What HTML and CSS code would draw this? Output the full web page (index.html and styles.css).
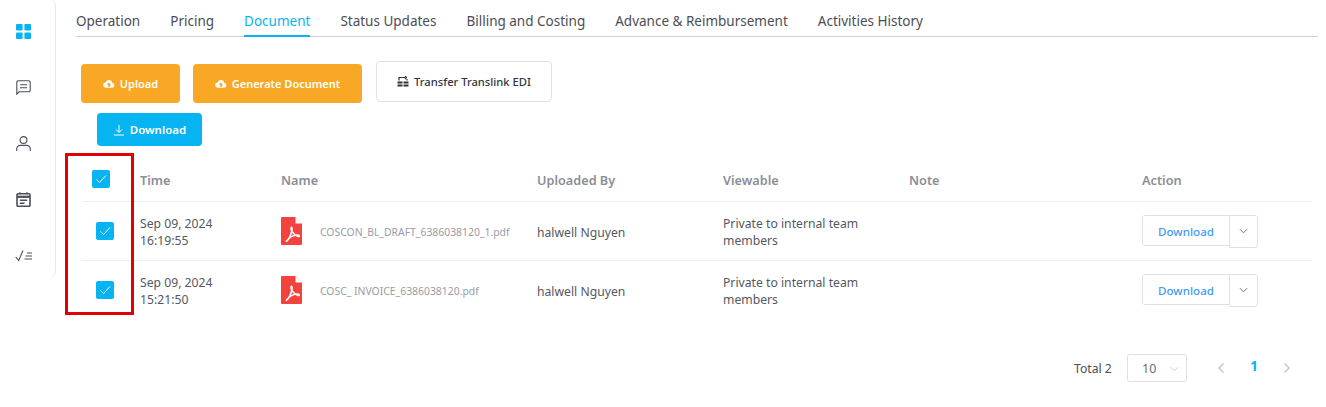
FILE: index.html
```html
<!DOCTYPE html>
<html lang="en">
<head>
<meta charset="utf-8">
<title>Document</title>
<link rel="stylesheet" href="styles.css">
</head>
<body>
<div class="page">
  <aside class="sidebar">
    <svg class="nav-icon" viewBox="0 0 15 15"><rect x="0" y="0" width="6.600" height="6.600" rx="1" fill="#06b4f1"/><rect x="8.400" y="0" width="6.600" height="6.600" rx="1" fill="#06b4f1"/><rect x="0" y="8.400" width="6.600" height="6.600" rx="1" fill="#06b4f1"/><rect x="8.400" y="8.400" width="6.600" height="6.600" rx="1" fill="#06b4f1"/></svg>
    <svg class="nav-icon" viewBox="0 0 15 15" fill="none" stroke="#4a4f5a" stroke-width="1.100"><path d="M.8 14.200V2.300A1.500 1.500 0 0 1 2.300.8h10.400a1.500 1.500 0 0 1 1.500 1.500v8a1.500 1.500 0 0 1-1.500 1.500H3.200z"/><path d="M4 4.800h7M4 7.800h7"/></svg>
    <svg class="nav-icon" viewBox="0 0 15 15" fill="none" stroke="#4a4f5a" stroke-width="1.100"><circle cx="7.500" cy="4" r="3.400"/><path d="M.7 15v-2a3.600 3.600 0 0 1 3.600-3.600h6.400a3.600 3.600 0 0 1 3.600 3.600v2"/></svg>
    <svg class="nav-icon" viewBox="0 0 15 15" fill="none" stroke="#4a4f5a" stroke-width="1.600"><rect x="1" y="1.800" width="13" height="12.500" rx="1"/><path d="M1 4.800h13" stroke-width="2.200"/><path d="M4 .3v2M11 .3v2M3.800 8.300h7.400M3.800 11.300h4.700" stroke-width="1.400"/></svg>
    <svg class="nav-icon wide" viewBox="0 0 18 15" fill="none" stroke="#4a4f5a" stroke-width="1.100"><path d="M.7 9l3 3.500L8 2.500"/><path d="M12 5h5M10.500 8H17M9.500 11H17"/></svg>
  </aside>
  <main class="main">
    <nav class="tabs">
      <a class="tab">Operation</a>
      <a class="tab">Pricing</a>
      <a class="tab active">Document</a>
      <a class="tab">Status Updates</a>
      <a class="tab">Billing and Costing</a>
      <a class="tab">Advance &amp; Reimbursement</a>
      <a class="tab">Activities History</a>
    </nav>
    <div class="toolbar">
      <button class="btn orange upload"><svg class="btn-icon" viewBox="0 0 16 16"><path fill="#fff" d="M12.500 6.500a4.700 4.700 0 0 0-9-.6A3.500 3.500 0 0 0 4 13h8.500a3.300 3.300 0 0 0 0-6.500zM9.300 9v2.500H6.700V9H5l3-3 3 3z"/></svg>Upload</button>
      <button class="btn orange generate"><svg class="btn-icon" viewBox="0 0 16 16"><path fill="#fff" d="M12.500 6.500a4.700 4.700 0 0 0-9-.6A3.500 3.500 0 0 0 4 13h8.500a3.300 3.300 0 0 0 0-6.500zM9.300 9v2.500H6.700V9H5l3-3 3 3z"/></svg>Generate Document</button>
      <button class="btn outline"><svg class="btn-icon" viewBox="0 0 12 12"><path fill="none" stroke="#333" stroke-width="1.200" d="M2 4.500V1.500h6M8 0 9.500 1.500 8 3M10 4.500V3"/><path fill="#333" d="M.5 5.500h5v2h-5zM.5 8.500h5v2h-5zM6.500 5.500h5v2h-5zM6.500 8.500h5v2h-5z"/></svg>Transfer Translink EDI</button>
    </div>
    <div class="download-row">
      <button class="btn blue"><svg class="btn-icon" viewBox="0 0 12 12" fill="none" stroke="#fff" stroke-width="1"><path d="M6 1v7M3 5.500 6 8.500l3-3M1 11h10"/></svg>Download</button>
    </div>
    <div class="table">
      <div class="row head">
        <span class="check"><span class="box"><svg viewBox="0 0 12 12"><path d="M1.500 6.500 4.500 9.500 11 2.500" fill="none" stroke="#fff" stroke-width="1"/></svg></span></span>
        <span>Time</span><span>Name</span><span>Uploaded By</span><span>Viewable</span><span>Note</span><span>Action</span>
      </div>
      <div class="row item">
        <span class="check"><span class="box"><svg viewBox="0 0 12 12"><path d="M1.500 6.500 4.500 9.500 11 2.500" fill="none" stroke="#fff" stroke-width="1"/></svg></span></span>
        <span class="txt">Sep 09, 2024<br>16:19:55</span>
        <span class="file"><svg class="pdf" viewBox="0 0 21 28"><path fill="#f4433c" d="M1 0h13.500l6.500 6.500V27a1 1 0 0 1-1 1H1a1 1 0 0 1-1-1V1a1 1 0 0 1 1-1z"/><path fill="#fff" d="M14.500 0 21 6.500h-6.500z"/><path fill="none" stroke="#fff" stroke-width="1.500" d="M5 24.500c2.500-1.500 5-7 6-11.500.5-2-.5-4-1-2-.5 2 2 6.500 7 8.500 2 .5 2-1.500-1-1.500-3 0-7 1.500-11 6.500z"/></svg><span class="fname txt">COSCON_BL_DRAFT_6386038120_1.pdf</span></span>
        <span class="txt">halwell Nguyen</span>
        <span class="txt">Private to internal team<br>members</span>
        <span></span>
        <span class="split"><button class="dl">Download</button><button class="caret"><svg viewBox="0 0 10 6"><path d="M1 1l4 4 4-4" fill="none" stroke="#5b6270" stroke-width="1"/></svg></button></span>
      </div>
      <div class="row item last">
        <span class="check"><span class="box"><svg viewBox="0 0 12 12"><path d="M1.500 6.500 4.500 9.500 11 2.500" fill="none" stroke="#fff" stroke-width="1"/></svg></span></span>
        <span class="txt">Sep 09, 2024<br>15:21:50</span>
        <span class="file"><svg class="pdf" viewBox="0 0 21 28"><path fill="#f4433c" d="M1 0h13.500l6.500 6.500V27a1 1 0 0 1-1 1H1a1 1 0 0 1-1-1V1a1 1 0 0 1 1-1z"/><path fill="#fff" d="M14.500 0 21 6.500h-6.500z"/><path fill="none" stroke="#fff" stroke-width="1.500" d="M5 24.500c2.500-1.500 5-7 6-11.500.5-2-.5-4-1-2-.5 2 2 6.500 7 8.500 2 .5 2-1.500-1-1.500-3 0-7 1.500-11 6.500z"/></svg><span class="fname txt">COSC_ INVOICE_6386038120.pdf</span></span>
        <span class="txt">halwell Nguyen</span>
        <span class="txt">Private to internal team<br>members</span>
        <span></span>
        <span class="split"><button class="dl">Download</button><button class="caret"><svg viewBox="0 0 10 6"><path d="M1 1l4 4 4-4" fill="none" stroke="#5b6270" stroke-width="1"/></svg></button></span>
      </div>
    </div>
    <div class="pager">
      <span class="total">Total 2</span>
      <span class="size">10<svg viewBox="0 0 10 6"><path d="M1 1l4 4 4-4" fill="none" stroke="#c6c9d2" stroke-width="1"/></svg></span>
      <svg class="arrow" viewBox="0 0 8 12"><path d="M6.500 1.500 2 6l4.500 4.500" fill="none" stroke="#c6c9d2" stroke-width="1.600"/></svg>
      <span class="page-num">1</span>
      <svg class="arrow" viewBox="0 0 8 12"><path d="M1.500 1.500 6 6l-4.500 4.500" fill="none" stroke="#c6c9d2" stroke-width="1.600"/></svg>
    </div>
  </main>
  <div class="highlight"></div>
</div>
</body>
</html>
```
FILE: styles.css
```css
* { box-sizing: border-box; }
html, body { margin: 0; padding: 0; background: #fff; }
body { font-family: "Noto Sans", "Open Sans", sans-serif; color: #55585f; font-size: 13px; }
button { font-family: inherit; cursor: pointer; }
.page { position: relative; display: flex; width: 1326px; height: 407px; overflow: hidden; }

.sidebar { width: 56px; height: 280px; flex: none; margin-top: -1px; border-right: 1px solid #e6e8ec; border-radius: 0 8px 8px 0; display: flex; flex-direction: column; align-items: center; padding: 25px 8px 0 0; gap: 41px; }
.nav-icon { width: 15px; height: 15px; display: block; flex: none; }
.nav-icon.wide { width: 18px; }

.main { flex: 1; min-width: 0; padding-left: 20px; padding-right: 8px; }
.tabs { display: flex; gap: 30px; height: 37px; border-bottom: 1px solid #cfd1d6; padding-top: 11px; font-size: 13.500px; line-height: 20px; color: #4a4d55; }
.tab { display: block; height: 26px; }
.tab.active { color: #06b4f1; border-bottom: 2px solid #06b4f1; }

.toolbar { display: flex; align-items: flex-start; margin-top: 24px; padding-left: 5px; }
.btn { display: inline-flex; align-items: center; justify-content: center; border-radius: 4px; font-size: 11px; font-weight: 600; border: 0; color: #fff; padding: 0; }
.btn-icon { width: 12px; height: 12px; margin-right: 5px; }
.orange { background: #f9a825; height: 39px; margin-top: 3px; }
.upload { width: 99px; margin-right: 13px; }
.generate { width: 169px; margin-right: 14px; }
.outline { width: 176px; height: 41px; background: #fff; border: 1px solid #dfe1e8; color: #33363d; font-weight: 500; font-size: 11.200px; }
.blue { background: #06b4f1; width: 105px; height: 33px; font-size: 11.500px; }
.download-row { margin-top: 10px; padding-left: 21px; }

.table { margin-top: 14px; margin-left: 6px; width: 1230px; }
.row { display: grid; grid-template-columns: 58px 141px 256px 186px 186px 233px 170px; align-items: center; border-bottom: 1px solid #eceef2; line-height: 17px; font-size: 12.200px; }
.head { height: 42px; font-weight: 600; color: #8b8e96; font-size: 12.700px; }
.head .check { margin-top: -3px; }
.item { height: 59px; }
.item.last { height: 58px; border-bottom: 0; }
.txt { padding-top: 2px; }
.check { display: flex; padding-left: 10px; }
.item .check { padding-left: 14px; }
.box { width: 18px; height: 18px; border-radius: 2px; background: #06b4f1; display: flex; align-items: center; justify-content: center; }
.box svg { width: 12px; height: 12px; }
.file { display: flex; align-items: center; }
.pdf { width: 21px; height: 28px; margin-right: 18px; flex: none; }
.fname { font-size: 10.400px; color: #9a9ca3; white-space: nowrap; }
.split { display: flex; align-items: flex-start; }
.dl { width: 88px; height: 31px; background: #fff; border: 1px solid #dfe1e8; border-radius: 3px 0 0 3px; color: #3f9bf5; font-size: 11.600px; font-weight: 500; padding: 2px 0 0; }
.caret { width: 29px; height: 33px; margin-left: -1px; background: #fff; border: 1px solid #dfe1e8; border-radius: 0 3px 3px 0; padding: 0; display: flex; align-items: center; justify-content: center; }
.caret svg { width: 9px; height: 6px; }

.pager { display: flex; align-items: center; margin-top: 35px; padding-left: 998px; height: 28px; }
.total { font-size: 12.200px; color: #4a4d55; width: 53px; }
.size { width: 60px; height: 28px; border: 1px solid #dfe1e8; border-radius: 3px; display: flex; align-items: center; justify-content: space-between; padding: 0 7px 0 14px; color: #6b6e76; font-size: 12.500px; margin-right: 30px; }
.size svg { width: 9px; height: 6px; margin-top: 2px; }
.arrow { width: 8px; height: 12px; flex: none; }
.page-num { width: 58px; text-align: center; color: #06b4f1; font-weight: 700; font-size: 14px; margin-top: -6px; }

.highlight { position: absolute; left: 65px; top: 153px; width: 69px; height: 162px; border: 3px solid #e30000; }
```
